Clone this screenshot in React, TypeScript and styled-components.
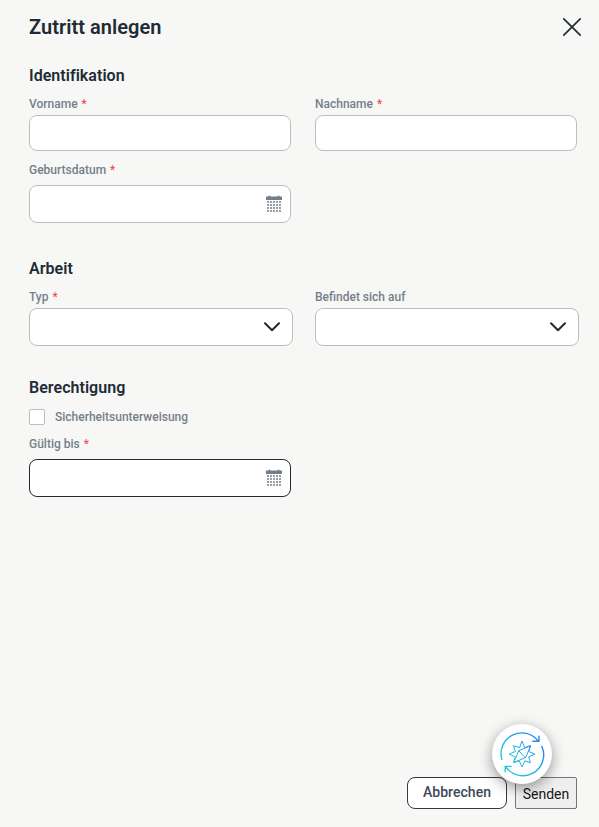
import React from "react";
import styled, { createGlobalStyle, css } from "styled-components";

const GlobalStyle = createGlobalStyle`
  *, *::before, *::after { box-sizing: border-box; }
  body {
    margin: 0;
    background: #f7f7f5;
    color: #212b36;
    font-family: Roboto, "Liberation Sans", sans-serif;
  }
`;

const Dialog = styled.main`
  position: relative;
  display: flex;
  flex-direction: column;
  width: 599px;
  height: 827px;
  padding: 15px 17px 18px 29px;
  overflow: hidden;
`;

const Header = styled.header`
  display: flex;
  align-items: center;
  justify-content: space-between;
  height: 24px;
`;

const Title = styled.h1`
  margin: 0;
  font-size: 20px;
  line-height: 24px;
  font-weight: 600;
  letter-spacing: 0.05px;
`;

const CloseButton = styled.button`
  display: flex;
  padding: 0;
  border: 0;
  background: none;
  color: #212b36;
`;

const Section = styled.section<{ $top: number }>`
  margin-top: ${(p) => p.$top}px;
`;

const SectionTitle = styled.h2`
  margin: 0;
  font-size: 16px;
  line-height: 20px;
  font-weight: 600;
  letter-spacing: 0.04px;
`;

const FieldRow = styled.div<{ $top: number }>`
  display: grid;
  grid-template-columns: 264px 264px;
  column-gap: 22px;
  margin-top: ${(p) => p.$top}px;
`;

const FieldBox = styled.div<{ $gap: number }>`
  display: flex;
  flex-direction: column;
  gap: ${(p) => p.$gap}px;
`;

const labelText = css`
  font-size: 12px;
  line-height: 16px;
  font-weight: 500;
  color: #757f8a;
`;

const Label = styled.label`
  ${labelText}
  white-space: pre;
`;

const Required = styled.span`
  margin-left: 1px;
  color: #ef4444;
  font-weight: 400;
`;

const Control = styled.div<{ $kind: "text" | "date" | "select"; $active?: boolean }>`
  display: flex;
  align-items: center;
  justify-content: flex-end;
  width: ${(p) => (p.$kind === "select" ? 264 : 262)}px;
  height: ${(p) => (p.$kind === "text" ? 36 : 38)}px;
  padding-right: ${(p) => (p.$kind === "select" ? 11 : 8)}px;
  border: 1px solid ${(p) => (p.$active ? "#212b36" : "#bdbdbd")};
  border-radius: 8px;
  background: #fff;
`;

const CheckRow = styled.label`
  ${labelText}
  display: flex;
  align-items: center;
  gap: 10px;
  margin-top: 11px;
`;

const CheckBox = styled.span`
  width: 16px;
  height: 16px;
  border: 1px solid #bdbdbd;
  border-radius: 2px;
  background: #fff;
`;

const Footer = styled.footer`
  display: flex;
  justify-content: flex-end;
  gap: 8px;
  margin-top: auto;
  padding-right: 5px;
`;

const CancelButton = styled.button`
  width: 100px;
  height: 32px;
  padding: 0 0 2px;
  border: 1px solid #2b3a4c;
  border-radius: 8px;
  background: #fff;
  color: #3d4856;
  font: 500 14px/20px Roboto, sans-serif;
  letter-spacing: 0.04px;
`;

const SubmitButton = styled.button`
  width: 62px;
  height: 32px;
  padding: 1px 0 0;
  border: 1px solid #767676;
  border-radius: 2px;
  background: #efefef;
  color: #161616;
  font: 400 14px/18px Roboto, sans-serif;
`;

const AssistantBubble = styled.button`
  position: absolute;
  left: 492px;
  top: 724px;
  display: flex;
  width: 60px;
  height: 60px;
  padding: 0;
  border: 0;
  border-radius: 50%;
  background: #fff;
  box-shadow: 0 4px 14px rgba(0, 0, 0, 0.4);
`;

const CloseIcon = () => (
  <svg width="20" height="20" viewBox="0 0 20 20" fill="none" stroke="currentColor" strokeWidth="1.7" strokeLinecap="round">
    <path d="M1.8 1.8 18.2 18.2M18.2 1.8 1.8 18.2" />
  </svg>
);

const ChevronIcon = () => (
  <svg width="18" height="12" viewBox="0 0 18 12" fill="none" stroke="#212b36" strokeWidth="2" strokeLinecap="round" strokeLinejoin="round">
    <path d="M2 2.2 9 9.2 16 2.2" />
  </svg>
);

const CalendarIcon = () => (
  <svg width="16" height="18" viewBox="0 0 16 18" fill="#757f8a">
    <path d="M.3 1.5h2.2V.7h2v.8h7V.7h2v.8h2.2q.3 0 .3.3V5H0V1.8q0-.3.3-.3z" />
    {[6, 9, 12, 15].map((y) =>
      [1, 4, 7, 10, 13].map((x) => <rect key={`${x}-${y}`} x={x} y={y} width="2" height="2" opacity=".75" />)
    )}
  </svg>
);

const starPoints = Array.from({ length: 16 }, (_, i) => {
  const angle = (i * Math.PI) / 8;
  const radius = i % 2 ? 7.2 : i % 4 ? 12 : 12.8;
  return `${30 + radius * Math.sin(angle)},${30.2 - radius * Math.cos(angle)}`;
}).join(" ");

const CompassIcon = () => (
  <svg width="60" height="60" viewBox="0 0 60 60" fill="none" stroke="url(#compass)" strokeLinecap="round" strokeLinejoin="round">
    <defs>
      <linearGradient id="compass" gradientUnits="userSpaceOnUse" x1="12" y1="43" x2="47" y2="16">
        <stop offset="0" stopColor="#20d0d6" />
        <stop offset="1" stopColor="#2687f5" />
      </linearGradient>
    </defs>
    <g strokeWidth="1.4">
      <path d="M9.9 35.6A20.7 20.7 0 0 1 46.3 17.2M40.8 17.2H47V12.1" />
      <path d="M49.9 22.5A20.8 20.8 0 0 1 13.6 42.5M19.2 42.4H13.2v5.3" />
    </g>
    <g strokeWidth="1">
      <polygon points={starPoints} />
      <path d="M38.3 21.9 26.7 26.7 21.7 38.5 33.3 33.7ZM26.7 26.7 33.3 33.7" />
    </g>
  </svg>
);

type FieldProps = {
  label: string;
  kind?: "text" | "date" | "select";
  required?: boolean;
  active?: boolean;
};

const Field = ({ label, kind = "text", required, active }: FieldProps) => (
  <FieldBox $gap={kind === "date" ? 7 : 3}>
    <Label>
      {label}
      {required && <Required> *</Required>}
    </Label>
    <Control $kind={kind} $active={active}>
      {kind === "date" && <CalendarIcon />}
      {kind === "select" && <ChevronIcon />}
    </Control>
  </FieldBox>
);

export default function App() {
  return (
    <>
      <GlobalStyle />
      <Dialog>
        <Header>
          <Title>Zutritt anlegen</Title>
          <CloseButton aria-label="Schließen"><CloseIcon /></CloseButton>
        </Header>
        <Section $top={27}>
          <SectionTitle>Identifikation</SectionTitle>
          <FieldRow $top={10}>
            <Field label="Vorname" required />
            <Field label="Nachname" required />
          </FieldRow>
          <FieldRow $top={11}>
            <Field label="Geburtsdatum" kind="date" required />
          </FieldRow>
        </Section>
        <Section $top={36}>
          <SectionTitle>Arbeit</SectionTitle>
          <FieldRow $top={10}>
            <Field label="Typ" kind="select" required />
            <Field label="Befindet sich auf" kind="select" />
          </FieldRow>
        </Section>
        <Section $top={32}>
          <SectionTitle>Berechtigung</SectionTitle>
          <CheckRow><CheckBox />Sicherheitsunterweisung</CheckRow>
          <FieldRow $top={11}>
            <Field label="Gültig bis" kind="date" required active />
          </FieldRow>
        </Section>
        <Footer>
          <CancelButton>Abbrechen</CancelButton>
          <SubmitButton>Senden</SubmitButton>
        </Footer>
        <AssistantBubble aria-label="Assistent"><CompassIcon /></AssistantBubble>
      </Dialog>
    </>
  );
}
